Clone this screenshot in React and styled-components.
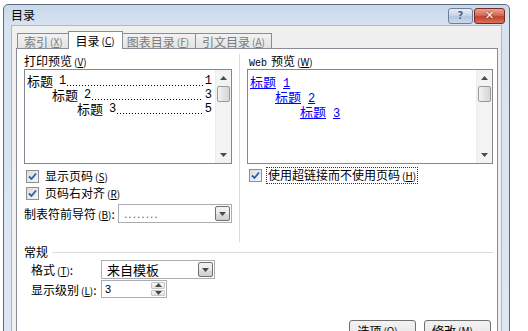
import React from "react";
import styled, { createGlobalStyle } from "styled-components";

const GlobalStyle = createGlobalStyle`
  html, body {
    margin: 0;
    padding: 0;
    background: #ffffff;
    overflow: hidden;
  }
  body {
    font-family: "Noto Sans CJK SC", "DejaVu Sans", sans-serif;
    font-size: 12px;
    color: #000;
  }
`;

const Page = styled.div`
  width: 528px;
  height: 331px;
  padding: 4px 0 0 3px;
  box-sizing: border-box;
  overflow: hidden;
`;

const Window = styled.div`
  width: 507px;
  height: 345px;
  box-sizing: border-box;
  border: 1px solid #5b6b80;
  border-radius: 5px 5px 0 0;
  background: linear-gradient(180deg, #c9d8ea 0px, #d7e3f1 20px, #dde7f3 100%);
  display: flex;
  flex-direction: column;
  padding: 0 7px 0 7px;
`;

const TitleBar = styled.div`
  height: 20px;
  display: flex;
  align-items: center;
  justify-content: space-between;
`;

const Title = styled.span`
  font-size: 12px;
  line-height: 14px;
  margin-top: -1px;
  color: #000;
`;

const Caption = styled.div`
  display: flex;
  gap: 1px;
  margin-top: 2px;
  margin-right: -3px;
`;

const CapButton = styled.div`
  width: ${(p) => (p.$close ? 29 : 23)}px;
  height: 14px;
  border: 1px solid ${(p) => (p.$close ? "#7a2a20" : "#6d7f98")};
  border-radius: 3px;
  background: ${(p) =>
    p.$close
      ? "linear-gradient(180deg, #e8a493 0%, #d46b54 45%, #c2422a 55%, #d8715a 100%)"
      : "linear-gradient(180deg, #e6eef8 0%, #c8d7ea 45%, #b2c6de 55%, #cbdaed 100%)"};
  display: flex;
  align-items: center;
  justify-content: center;
  color: ${(p) => (p.$close ? "#fff" : "#4d5f78")};
  font-family: "DejaVu Sans", sans-serif;
  font-weight: bold;
  font-size: ${(p) => (p.$close ? 11 : 10)}px;
  line-height: 14px;
  text-shadow: ${(p) => (p.$close ? "0 0 2px #6a1a10" : "0 0 1px #fff")};
`;

const Body = styled.div`
  flex: 1;
  background: #f0f0f0;
  border: 1px solid #a9b8cc;
  border-bottom: none;
  padding: 5px 3px 0 4px;
  display: flex;
  flex-direction: column;
`;

const Tabs = styled.div`
  display: flex;
  align-items: flex-end;
  padding-left: 1px;
  height: 18px;
  position: relative;
  z-index: 1;
`;

const Tab = styled.div`
  height: ${(p) => (p.$active ? 18 : 16)}px;
  box-sizing: border-box;
  padding: 0 ${(p) => (p.$active ? 7 : 6)}px;
  margin: ${(p) => (p.$active ? "0 -2px" : "0")};
  border: 1px solid #898c95;
  border-bottom: ${(p) => (p.$active ? "none" : "1px solid #898c95")};
  border-left: ${(p) => (p.$first || p.$active ? "1px solid #898c95" : "none")};
  background: ${(p) =>
    p.$active ? "#ffffff" : "linear-gradient(180deg, #f2f2f2 0%, #e3e3e3 100%)"};
  color: ${(p) => (p.$active ? "#000" : "#7a7a7a")};
  display: flex;
  align-items: center;
  font-size: 12px;
  white-space: nowrap;
  position: relative;
  z-index: ${(p) => (p.$active ? 2 : 1)};
`;

const Key = styled.span`
  font-size: 10px;
  margin-left: 2px;
`;

const Panel = styled.div`
  flex: 1;
  margin-top: -1px;
  border: 1px solid #898c95;
  background: #ffffff;
  display: flex;
  flex-direction: column;
`;

const Columns = styled.div`
  display: grid;
  grid-template-columns: 222px 1fr;
  height: 193px;
  padding-top: 5px;
  box-sizing: border-box;
`;

const Column = styled.div`
  display: flex;
  flex-direction: column;
  padding: ${(p) => (p.$right ? "0 4px 0 9px" : "0 7px 0 7px")};
  border-left: ${(p) => (p.$right ? "1px solid #dcdcdc" : "none")};
`;

const Label = styled.div`
  font-size: 12px;
  line-height: 14px;
  height: 14px;
  margin-bottom: 1px;
  white-space: nowrap;
`;

const WebWord = styled.span`
  font-family: "Liberation Mono", monospace;
  font-size: 10px;
  margin-right: 4px;
`;

const ListBox = styled.div`
  height: 95px;
  border: 1px solid #828790;
  display: flex;
  background: #fff;
  box-sizing: border-box;
  margin-left: ${(p) => (p.$right ? "-2px" : "0")};
`;

const ListContent = styled.div`
  flex: 1;
  padding: 4px 2px 0 2px;
  display: flex;
  flex-direction: column;
`;

const TocRow = styled.div`
  display: flex;
  align-items: center;
  height: 14px;
  padding-left: ${(p) => p.$indent}px;
  font-size: 13px;
  line-height: 14px;
  white-space: nowrap;
`;

const TocNum = styled.span`
  font-family: "Liberation Mono", monospace;
  font-size: 12px;
  margin-left: 6px;
`;

const Leader = styled.span`
  flex: 1;
  align-self: stretch;
  margin: 0 2px 0 1px;
  background-image: linear-gradient(90deg, #000 1px, transparent 1px);
  background-size: 3px 1px;
  background-repeat: repeat-x;
  background-position: left 11px;
`;

const PageNum = styled.span`
  font-family: "Liberation Mono", monospace;
  font-size: 12px;
  margin-right: 1px;
`;

const LinkRow = styled.a`
  display: block;
  align-self: flex-start;
  margin-left: ${(p) => p.$indent}px;
  height: 15px;
  line-height: 15px;
  color: #0000ff;
  text-decoration: underline;
  font-size: 13px;
  white-space: nowrap;
`;

const LinkNum = styled.span`
  font-family: "Liberation Mono", monospace;
  font-size: 12px;
  margin-left: 7px;
`;

const ScrollBar = styled.div`
  width: 15px;
  background: #f3f3f3;
  border-left: 1px solid #ececec;
  display: flex;
  flex-direction: column;
  align-items: center;
`;

const Arrow = styled.div`
  height: 16px;
  width: 100%;
  display: flex;
  align-items: center;
  justify-content: center;
`;

const Thumb = styled.div`
  width: 13px;
  height: 16px;
  box-sizing: border-box;
  border: 1px solid #9a9a9a;
  border-radius: 2px;
  background: linear-gradient(90deg, #f4f4f4 0%, #e2e2e2 50%, #d6d6d6 100%);
`;

const Spacer = styled.div`
  flex: 1;
`;

const CheckRow = styled.div`
  display: flex;
  align-items: center;
  height: 17px;
  gap: 4px;
  margin-top: ${(p) => p.$top || 0}px;
  margin-left: ${(p) => p.$left ?? 2}px;
  white-space: nowrap;
`;

const Box = styled.div`
  width: 11px;
  height: 11px;
  border: 1px solid #8f8f8f;
  background: linear-gradient(135deg, #dcdcdc 0%, #f6f6f6 100%);
  display: flex;
  align-items: center;
  justify-content: center;
`;

const CheckLabel = styled.span`
  padding: 0 1px;
  border: 1px dotted ${(p) => (p.$focus ? "#333" : "transparent")};
  line-height: 14px;
`;

const FieldRow = styled.div`
  display: flex;
  align-items: center;
  margin-top: ${(p) => p.$top || 0}px;
  margin-left: ${(p) => p.$left || 0}px;
  height: ${(p) => p.$h || 19}px;
  white-space: nowrap;
`;

const FieldLabel = styled.span`
  width: ${(p) => p.$w}px;
  flex-shrink: 0;
`;

const Select = styled.div`
  width: ${(p) => p.$w}px;
  height: ${(p) => p.$h || 19}px;
  box-sizing: border-box;
  border: 1px solid #abadb3;
  display: flex;
  align-items: center;
  background: #fff;
  padding: 1px;
`;

const SelectText = styled.span`
  flex: 1;
  padding-left: ${(p) => p.$pad || 4}px;
  color: ${(p) => p.$color || "#000"};
  font-size: ${(p) => p.$size || 12}px;
  letter-spacing: ${(p) => p.$spacing || 0}px;
  font-family: ${(p) => (p.$latin ? '"Liberation Sans", sans-serif' : "inherit")};
`;

const DropButton = styled.div`
  width: 15px;
  height: 15px;
  box-sizing: border-box;
  border: 1px solid #707070;
  border-radius: 2px;
  background: linear-gradient(180deg, #f2f2f2 0%, #ebebeb 50%, #dddddd 51%, #cfcfcf 100%);
  display: flex;
  align-items: center;
  justify-content: center;
`;

const Spin = styled.div`
  width: 14px;
  height: 14px;
  display: flex;
  flex-direction: column;
  gap: 1px;
`;

const SpinHalf = styled.div`
  flex: 1;
  border: 1px solid #c6c6c6;
  border-radius: 1px;
  background: linear-gradient(180deg, #f7f7f7 0%, #e4e4e4 100%);
  display: flex;
  align-items: center;
  justify-content: center;
`;

const Group = styled.div`
  padding: 0 0 0 7px;
  margin-top: 3px;
`;

const GroupHead = styled.div`
  display: flex;
  align-items: center;
  gap: 4px;
  height: 14px;
  line-height: 14px;
  margin-right: 3px;
  &::after {
    content: "";
    flex: 1;
    height: 1px;
    background: #dcdcdc;
  }
`;

const Buttons = styled.div`
  display: flex;
  justify-content: flex-end;
  gap: 8px;
  margin-top: 22px;
  padding-right: 6px;
`;

const Button = styled.div`
  width: 67px;
  height: 23px;
  box-sizing: border-box;
  border: 1px solid #707070;
  border-radius: 3px;
  background: linear-gradient(180deg, #f2f2f2 0%, #ebebeb 50%, #dddddd 51%, #cfcfcf 100%);
  display: flex;
  justify-content: center;
  padding-top: 2px;
  line-height: 16px;
  white-space: nowrap;
`;

const Tri = ({ up }) => (
  <svg width="7" height="4" viewBox="0 0 7 4">
    <path d={up ? "M0 4 L3.5 0 L7 4 Z" : "M0 0 L3.5 4 L7 0 Z"} fill="#4a4a4a" />
  </svg>
);

const Check = () => (
  <svg width="9" height="9" viewBox="0 0 9 9">
    <path d="M1 4.5 L3.5 7 L8 1.5" fill="none" stroke="#2a5db0" strokeWidth="1.8" />
  </svg>
);

const Mn = ({ k }) => (
  <Key>
    (<u>{k}</u>)
  </Key>
);

const ScrollTrack = () => (
  <ScrollBar>
    <Arrow>
      <Tri up />
    </Arrow>
    <Thumb />
    <Spacer />
    <Arrow>
      <Tri />
    </Arrow>
  </ScrollBar>
);

const App = () => {
  return (
    <Page>
      <GlobalStyle />
      <Window>
        <TitleBar>
          <Title>目录</Title>
          <Caption>
            <CapButton>?</CapButton>
            <CapButton $close>✕</CapButton>
          </Caption>
        </TitleBar>
        <Body>
          <Tabs>
            <Tab $first>
              索引<Mn k="X" />
            </Tab>
            <Tab $active>
              目录<Mn k="C" />
            </Tab>
            <Tab>
              图表目录<Mn k="F" />
            </Tab>
            <Tab>
              引文目录<Mn k="A" />
            </Tab>
          </Tabs>
          <Panel>
            <Columns>
              <Column>
                <Label>
                  打印预览<Mn k="V" />
                </Label>
                <ListBox>
                  <ListContent>
                    {[1, 3, 5].map((page, i) => (
                      <TocRow key={page} $indent={i * 25}>
                        标题<TocNum>{i + 1}</TocNum>
                        <Leader />
                        <PageNum>{page}</PageNum>
                      </TocRow>
                    ))}
                  </ListContent>
                  <ScrollTrack />
                </ListBox>
                <CheckRow $top={4}>
                  <Box>
                    <Check />
                  </Box>
                  <CheckLabel>
                    显示页码<Mn k="S" />
                  </CheckLabel>
                </CheckRow>
                <CheckRow>
                  <Box>
                    <Check />
                  </Box>
                  <CheckLabel>
                    页码右对齐<Mn k="R" />
                  </CheckLabel>
                </CheckRow>
                <FieldRow $top={2}>
                  <FieldLabel $w={94}>
                    制表符前导符<Mn k="B" />:
                  </FieldLabel>
                  <Select $w={114}>
                    <SelectText $color="#666" $spacing={1} $latin>
                      ........
                    </SelectText>
                    <DropButton>
                      <Tri />
                    </DropButton>
                  </Select>
                </FieldRow>
              </Column>
              <Column $right>
                <Label>
                  <WebWord>Web</WebWord>预览<Mn k="W" />
                </Label>
                <ListBox $right>
                  <ListContent>
                    {[0, 1, 2].map((i) => (
                      <LinkRow key={i} $indent={i * 25}>
                        标题<LinkNum>{i + 1}</LinkNum>
                      </LinkRow>
                    ))}
                  </ListContent>
                  <ScrollTrack />
                </ListBox>
                <CheckRow $top={3} $left={0}>
                  <Box>
                    <Check />
                  </Box>
                  <CheckLabel $focus>
                    使用超链接而不使用页码<Mn k="H" />
                  </CheckLabel>
                </CheckRow>
              </Column>
            </Columns>
            <Group>
              <GroupHead>常规</GroupHead>
              <FieldRow $top={1} $left={7}>
                <FieldLabel $w={70}>
                  格式<Mn k="T" />:
                </FieldLabel>
                <Select $w={114}>
                  <SelectText $size={13}>来自模板</SelectText>
                  <DropButton>
                    <Tri />
                  </DropButton>
                </Select>
              </FieldRow>
              <FieldRow $top={1} $left={7} $h={18}>
                <FieldLabel $w={70}>
                  显示级别<Mn k="L" />:
                </FieldLabel>
                <Select $w={66} $h={18}>
                  <SelectText $pad={2} $latin $size={11}>
                    3
                  </SelectText>
                  <Spin>
                    <SpinHalf>
                      <Tri up />
                    </SpinHalf>
                    <SpinHalf>
                      <Tri />
                    </SpinHalf>
                  </Spin>
                </Select>
              </FieldRow>
            </Group>
            <Buttons>
              <Button>
                选项<Mn k="O" />...
              </Button>
              <Button>
                修改<Mn k="M" />...
              </Button>
            </Buttons>
          </Panel>
        </Body>
      </Window>
    </Page>
  );
};

export default App;
